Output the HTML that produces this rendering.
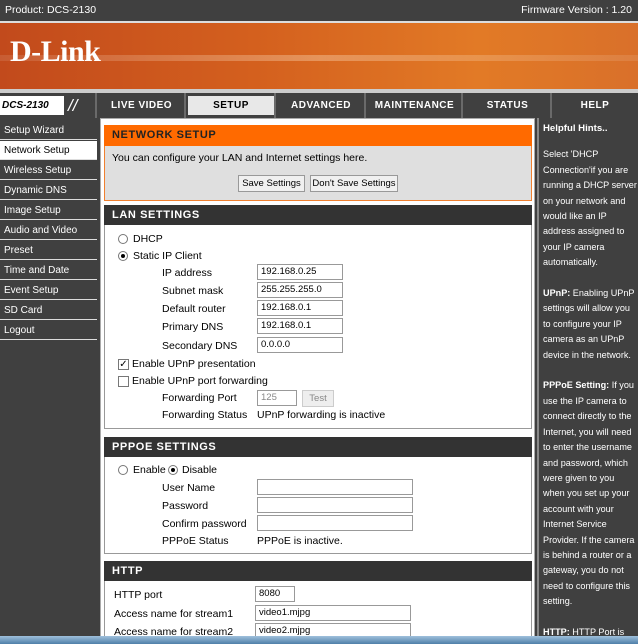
<!DOCTYPE html>
<html style="width:638px;height:644px;overflow:hidden"><head><meta charset="utf-8"><style>
*{margin:0;padding:0;box-sizing:border-box}
html,body{width:638px;height:644px;overflow:hidden}
body{background:#404040;font-family:"Liberation Sans",sans-serif;font-size:10.5px;color:#000;position:relative}
.a{position:absolute}
.top{left:0;top:0;width:638px;height:21px;background:#404040;color:#fff;font-size:10.5px}
.banner{left:0;top:23px;width:638px;height:66px;background:linear-gradient(90deg,#c24a1c 0%,#d4601e 40%,#e27a26 75%,#d9702a 100%)}
.nav{left:0;top:93px;width:638px;height:25px;background:#404040}
.tab{position:absolute;top:0;height:25px;color:#fff;font-weight:bold;font-size:10px;letter-spacing:.5px;text-align:center;line-height:25px;border-left:2px solid #6a6a6a}
.side div{position:absolute;left:0;width:97px;height:19px;color:#fff;font-size:10px;line-height:19px;padding-left:4px;border-bottom:1px solid #ddd}
.hdr{position:absolute;height:20px;background:#333;color:#fff;font-weight:bold;font-size:11px;letter-spacing:.6px;line-height:20px;padding-left:8px}
.box{position:absolute;border:1px solid #999;background:#fff}
.inp{position:absolute;height:16px;border:1px solid #999;background:#fff;font-size:9.5px;line-height:14px;padding-left:3px;white-space:nowrap;overflow:hidden}
.btn{position:absolute;height:17px;border:1px solid #999;background:#f0f0f0;font-size:9.5px;line-height:15px;text-align:center;white-space:nowrap}
.lbl{position:absolute;font-size:10.5px;white-space:nowrap}
.rad{position:absolute;width:10px;height:10px;border:1px solid #777;border-radius:50%;background:#fff}
.rad.on::after{content:"";position:absolute;left:2px;top:2px;width:4px;height:4px;border-radius:50%;background:#000}
.chk{position:absolute;width:11px;height:11px;border:1px solid #777;background:#fff;font-size:10px;line-height:9px;text-align:center}
.hint{left:537px;top:118px;width:101px;height:518px;overflow:hidden;background:#404040;border-left:2px solid #888;color:#fff;font-size:9.1px;line-height:15.4px;padding:3px 0 0 4px}
.hint p{margin-bottom:15.4px}
</style></head><body>
<div class="a top"><span class="a" style="left:5px;top:4px">Product: DCS-2130</span><span class="a" style="right:6px;top:4px">Firmware Version : 1.20</span></div>
<div class="a" style="left:0;top:21px;width:638px;height:2px;background:#ddd"></div>
<div class="a banner">
<div class="a" style="left:0;top:32px;width:638px;height:6px;background:linear-gradient(90deg,rgba(255,255,255,.1),rgba(255,230,200,.35),rgba(255,255,255,.1))"></div>
<div class="a" style="left:10px;top:12px;font-family:'Liberation Serif',serif;font-weight:bold;font-size:30px;color:#fff;letter-spacing:-.5px">D-Link</div>
</div>
<div class="a" style="left:0;top:89px;width:638px;height:4px;background:#ccc"></div>
<div class="a nav">
<div class="a" style="left:0;top:3px;width:64px;height:19px;background:#fff;font-style:italic;font-weight:bold;font-size:10px;line-height:19px;padding-left:2px">DCS-2130</div>
<div class="a" style="left:68px;top:2px;color:#fff;font-size:17px;font-style:italic;line-height:22px">//</div>
<div class="tab" style="left:95px;width:91px">LIVE VIDEO</div>
<div class="tab" style="left:184px;width:92px;border-color:#6a6a6a"><div style="position:absolute;left:2px;top:3px;right:2px;bottom:3px;background:#e8e8e8;color:#000;line-height:19px">SETUP</div></div>
<div class="tab" style="left:274px;width:92px">ADVANCED</div>
<div class="tab" style="left:364px;width:99px">MAINTENANCE</div>
<div class="tab" style="left:461px;width:91px">STATUS</div>
<div class="tab" style="left:550px;width:88px">HELP</div>
</div>
<div class="side">
<div style="top:121px">Setup Wizard</div>
<div style="top:141px;background:#fff;color:#000">Network Setup</div>
<div style="top:161px">Wireless Setup</div>
<div style="top:181px">Dynamic DNS</div>
<div style="top:201px">Image Setup</div>
<div style="top:221px">Audio and Video</div>
<div style="top:241px">Preset</div>
<div style="top:261px">Time and Date</div>
<div style="top:281px">Event Setup</div>
<div style="top:301px">SD Card</div>
<div style="top:321px">Logout</div>
</div>
<div class="a" style="left:100px;top:118px;width:435px;height:518px;background:#fff;border:1px solid #aaa;border-bottom:0"></div>
<div class="a" style="left:104px;top:125px;width:428px;height:76px;background:#dfdfdf;border:1px solid #f08030"></div>
<div class="a" style="left:104px;top:125px;width:428px;height:21px;background:#ff6a00;color:#222;font-weight:bold;font-size:11px;letter-spacing:.6px;line-height:21px;padding-left:8px">NETWORK SETUP</div>
<div class="lbl" style="left:112px;top:152px">You can configure your LAN and Internet settings here.</div>
<div class="btn" style="left:238px;top:175px;width:67px">Save Settings</div>
<div class="btn" style="left:310px;top:175px;width:88px">Don't Save Settings</div>
<div class="box" style="left:104px;top:205px;width:428px;height:224px"></div>
<div class="hdr" style="left:104px;top:205px;width:428px">LAN SETTINGS</div>
<div class="rad" style="left:118px;top:234px"></div><div class="lbl" style="left:133px;top:233px">DHCP</div>
<div class="rad on" style="left:118px;top:251px"></div><div class="lbl" style="left:133px;top:250px">Static IP Client</div>
<div class="lbl" style="left:162px;top:267px">IP address</div><div class="inp" style="left:257px;top:264px;width:86px">192.168.0.25</div>
<div class="lbl" style="left:162px;top:285px">Subnet mask</div><div class="inp" style="left:257px;top:282px;width:86px">255.255.255.0</div>
<div class="lbl" style="left:162px;top:303px">Default router</div><div class="inp" style="left:257px;top:300px;width:86px">192.168.0.1</div>
<div class="lbl" style="left:162px;top:321px">Primary DNS</div><div class="inp" style="left:257px;top:318px;width:86px">192.168.0.1</div>
<div class="lbl" style="left:162px;top:340px">Secondary DNS</div><div class="inp" style="left:257px;top:337px;width:86px">0.0.0.0</div>
<div class="chk" style="left:118px;top:359px">✓</div><div class="lbl" style="left:132px;top:358px">Enable UPnP presentation</div>
<div class="chk" style="left:118px;top:376px"></div><div class="lbl" style="left:132px;top:375px">Enable UPnP port forwarding</div>
<div class="lbl" style="left:162px;top:392px">Forwarding Port</div><div class="inp" style="left:257px;top:390px;width:40px;color:#888">125</div>
<div class="btn" style="left:302px;top:390px;width:32px;color:#888;background:#eee;border-color:#ccc">Test</div>
<div class="lbl" style="left:162px;top:409px">Forwarding Status</div><div class="lbl" style="left:257px;top:409px">UPnP forwarding is inactive</div>
<div class="box" style="left:104px;top:437px;width:428px;height:117px"></div>
<div class="hdr" style="left:104px;top:437px;width:428px">PPPOE SETTINGS</div>
<div class="rad" style="left:118px;top:465px"></div><div class="lbl" style="left:133px;top:464px">Enable</div>
<div class="rad on" style="left:168px;top:465px"></div><div class="lbl" style="left:182px;top:464px">Disable</div>
<div class="lbl" style="left:162px;top:482px">User Name</div><div class="inp" style="left:257px;top:479px;width:156px"></div>
<div class="lbl" style="left:162px;top:500px">Password</div><div class="inp" style="left:257px;top:497px;width:156px"></div>
<div class="lbl" style="left:162px;top:518px">Confirm password</div><div class="inp" style="left:257px;top:515px;width:156px"></div>
<div class="lbl" style="left:162px;top:535px">PPPoE Status</div><div class="lbl" style="left:257px;top:535px">PPPoE is inactive.</div>
<div class="box" style="left:104px;top:561px;width:428px;height:75px;border-bottom:0"></div>
<div class="hdr" style="left:104px;top:561px;width:428px">HTTP</div>
<div class="lbl" style="left:114px;top:589px">HTTP port</div><div class="inp" style="left:255px;top:586px;width:40px">8080</div>
<div class="lbl" style="left:114px;top:608px">Access name for stream1</div><div class="inp" style="left:255px;top:605px;width:156px">video1.mjpg</div>
<div class="lbl" style="left:114px;top:626px">Access name for stream2</div><div class="inp" style="left:255px;top:623px;width:156px;height:13px;border-bottom:0">video2.mjpg</div>
<div class="a hint"><p style="margin-bottom:11px"><b style="font-size:9.6px">Helpful Hints..</b></p><p>Select 'DHCP Connection'if you are running a DHCP server on your network and would like an IP address assigned to your IP camera automatically.</p><p><b>UPnP:</b> Enabling UPnP settings will allow you to configure your IP camera as an UPnP device in the network.</p><p><b>PPPoE Setting:</b> If you use the IP camera to connect directly to the Internet, you will need to enter the username and password, which were given to you when you set up your account with your Internet Service Provider. If the camera is behind a router or a gateway, you do not need to configure this setting.</p><p><b>HTTP:</b> HTTP Port is the port you allocate in order to connect to the IP camera via a standard web browser.</p><p><b>HTTPS:</b> HTTPS Port in a IP camera connects it with a PC via a secure web browser.</p><p><b>RTSP:</b> RTSP Port is the port you allocate in order to connect to a IP camera</p></div>
<div class="a" style="left:0;top:636px;width:638px;height:8px;background:linear-gradient(180deg,#9fc0dc,#4f7fa8)"></div>
</body></html>
